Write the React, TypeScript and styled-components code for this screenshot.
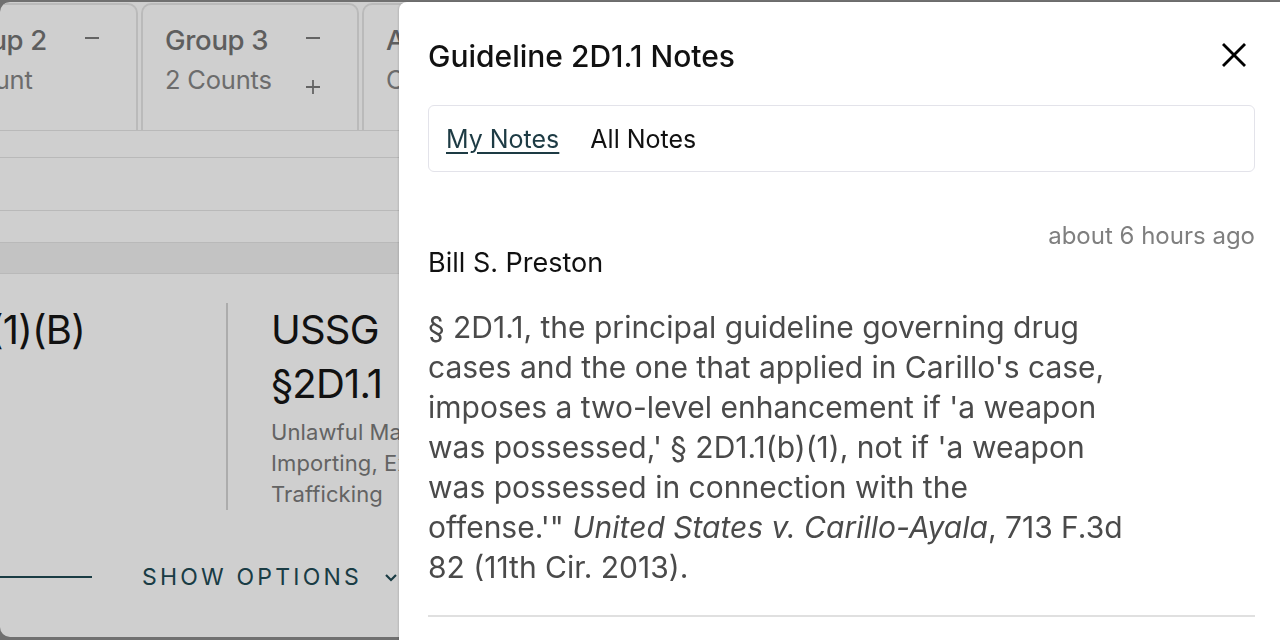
import React from "react";
import styled, { createGlobalStyle } from "styled-components";

const GlobalStyle = createGlobalStyle`
  html, body {
    margin: 0;
    padding: 0;
    height: 100%;
  }
  body {
    background: #8a8a8a;
    font-family: Inter, "Noto Sans", sans-serif;
    overflow: hidden;
  }
  #root { height: 100%; }
  * { box-sizing: border-box; }
`;

const Screen = styled.div`
  height: 640px;
  padding-top: 2px;
  overflow: hidden;
`;

const Page = styled.main`
  height: 635px;
  background: #ffffff;
  border-radius: 10px;
  overflow: hidden;
`;

const ScrollContent = styled.div`
  margin-left: -301px;
  width: 1500px;
`;

const TabStrip = styled.div`
  display: flex;
  gap: 3px;
  padding-top: 1px;
  border-bottom: 1px solid #e4e4e4;
`;

const GroupTab = styled.div`
  width: 218px;
  height: 127px;
  flex: none;
  display: flex;
  justify-content: space-between;
  padding: 18px 36px 0 22px;
  border: 2px solid #e6e6e6;
  border-bottom: none;
  border-radius: 10px 10px 0 0;
  overflow: hidden;
`;

const TabText = styled.div`
  display: flex;
  flex-direction: column;
`;

const TabTitle = styled.div`
  font-size: 27.5px;
  line-height: 34px;
  font-weight: 500;
  color: #747474;
  letter-spacing: -0.3px;
  white-space: nowrap;
`;

const TabSub = styled.div`
  margin-top: 8px;
  font-size: 25.5px;
  line-height: 30px;
  color: #868686;
  letter-spacing: -0.2px;
  white-space: nowrap;
`;

const TabActions = styled.div`
  display: flex;
  flex-direction: column;
  align-items: center;
  gap: 33px;
  padding-top: 7px;
  color: #7c7c7c;
`;

const Band = styled.div<{ $h: number; $shade?: boolean }>`
  height: ${(p) => p.$h}px;
  border-bottom: 1px solid #e4e4e4;
  background: ${(p) => (p.$shade ? "#f0f0f0" : "#ffffff")};
`;

const DetailRow = styled.div`
  display: flex;
  padding-top: 29px;
`;

const StatuteCol = styled.div`
  width: 527px;
  flex: none;
  display: flex;
  justify-content: flex-end;
  padding-right: 141px;
`;

const BigText = styled.div`
  font-size: 40px;
  line-height: 54px;
  color: #161616;
  letter-spacing: -0.8px;
  white-space: nowrap;
`;

const VDivider = styled.div`
  width: 2px;
  flex: none;
  background: #d4d4d4;
`;

const GuidelineCol = styled.div`
  padding-left: 43px;
  width: 172px;
  overflow: hidden;
`;

const GuidelineDesc = styled.div`
  margin-top: 6px;
  font-size: 22px;
  line-height: 31px;
  color: #7a7a7a;
  letter-spacing: 0.1px;
  white-space: nowrap;
`;

const OptionsRow = styled.div`
  display: grid;
  grid-template-columns: 369px auto 1fr;
  align-items: center;
  column-gap: 50px;
  padding-left: 24px;
  margin-top: 51px;
  height: 32px;
`;

const Rule = styled.div`
  height: 2px;
  background: #214a54;
`;

const OptionsButton = styled.button`
  display: flex;
  align-items: center;
  gap: 22px;
  padding: 0;
  border: none;
  background: none;
  font-family: inherit;
  font-size: 23px;
  letter-spacing: 3.2px;
  text-transform: uppercase;
  color: #214a54;
`;

const Overlay = styled.div`
  position: fixed;
  inset: 0;
  background: rgba(0, 0, 0, 0.19);
`;

const Drawer = styled.aside`
  position: fixed;
  top: 2px;
  right: 0;
  bottom: 0;
  width: 881px;
  background: #ffffff;
  border-top-left-radius: 8px;
  box-shadow: -1px 0 2px rgba(0, 0, 0, 0.12);
  padding: 38px 25px 0 29px;
  display: flex;
  flex-direction: column;
`;

const DrawerHeader = styled.header`
  display: flex;
  justify-content: space-between;
  align-items: flex-start;
`;

const DrawerTitle = styled.h2`
  margin: 0;
  font-size: 30px;
  line-height: 32px;
  font-weight: 500;
  color: #111111;
`;

const CloseButton = styled.button`
  margin: 2px 8px 0 0;
  width: 26px;
  height: 26px;
  padding: 0;
  border: none;
  background: none;
  color: #000;
  display: flex;
`;

const NotesTabs = styled.nav`
  margin-top: 33px;
  height: 67px;
  border: 1px solid #e3e3ea;
  border-radius: 6px;
  display: flex;
  align-items: center;
  gap: 31px;
  padding: 0 17px;
`;

const NotesTab = styled.span<{ $active?: boolean }>`
  font-size: 25px;
  line-height: 28px;
  color: ${(p) => (p.$active ? "#1d3b44" : "#111111")};
  text-decoration: ${(p) => (p.$active ? "underline" : "none")};
  text-underline-offset: 4px;
  text-decoration-thickness: 1.5px;
`;

const Note = styled.article`
  margin-top: 51px;
  display: flex;
  flex-direction: column;
`;

const Timestamp = styled.div`
  align-self: flex-end;
  font-size: 24px;
  line-height: 26px;
  color: #7f7f7f;
`;

const Author = styled.div`
  margin-top: 1px;
  font-size: 27px;
  line-height: 26px;
  color: #111111;
`;

const NoteBody = styled.p`
  margin: 31px 0 0;
  font-size: 30px;
  line-height: 40px;
  color: #4a4a4a;
  white-space: nowrap;
`;

const NoteDivider = styled.hr`
  margin: 28px 0 0;
  border: none;
  height: 2px;
  background: #e0e0e0;
`;

const MinusIcon = () => (
  <svg width="16" height="16" viewBox="0 0 16 16" fill="none">
    <line x1="1" y1="8" x2="15" y2="8" stroke="currentColor" strokeWidth="1.8" />
  </svg>
);

const PlusIcon = () => (
  <svg width="16" height="16" viewBox="0 0 16 16" fill="none">
    <line x1="1" y1="8" x2="15" y2="8" stroke="currentColor" strokeWidth="1.8" />
    <line x1="8" y1="1" x2="8" y2="15" stroke="currentColor" strokeWidth="1.8" />
  </svg>
);

const ChevronIcon = () => (
  <svg width="14" height="10" viewBox="0 0 14 10" fill="none">
    <polyline points="2,3 7,8 12,3" stroke="currentColor" strokeWidth="2.2" fill="none" />
  </svg>
);

const CloseIcon = () => (
  <svg width="26" height="26" viewBox="0 0 26 26" fill="none">
    <line x1="2" y1="2" x2="24" y2="24" stroke="currentColor" strokeWidth="2.8" />
    <line x1="24" y1="2" x2="2" y2="24" stroke="currentColor" strokeWidth="2.8" />
  </svg>
);

const groups = [
  { title: "Group 1", sub: "1 Count", canSplit: false },
  { title: "Group 2", sub: "1 Count", canSplit: false },
  { title: "Group 3", sub: "2 Counts", canSplit: true },
  { title: "All", sub: "Counts", canSplit: false },
];

export default function App() {
  return (
    <>
      <GlobalStyle />
      <Screen>
        <Page>
          <ScrollContent>
            <TabStrip>
              {groups.map((g) => (
                <GroupTab key={g.title}>
                  <TabText>
                    <TabTitle>{g.title}</TabTitle>
                    <TabSub>{g.sub}</TabSub>
                  </TabText>
                  <TabActions>
                    <MinusIcon />
                    {g.canSplit && <PlusIcon />}
                  </TabActions>
                </GroupTab>
              ))}
            </TabStrip>
            <Band $h={27} />
            <Band $h={53} />
            <Band $h={32} />
            <Band $h={31} $shade />
            <DetailRow>
              <StatuteCol>
                <BigText>21 U.S.C. § 841(b)(1)(B)</BigText>
              </StatuteCol>
              <VDivider />
              <GuidelineCol>
                <BigText>USSG</BigText>
                <BigText>§2D1.1</BigText>
                <GuidelineDesc>
                  Unlawful Manufacturing,
                  <br />
                  Importing, Exporting,
                  <br />
                  Trafficking
                </GuidelineDesc>
              </GuidelineCol>
            </DetailRow>
            <OptionsRow>
              <Rule />
              <OptionsButton>
                Show Options
                <ChevronIcon />
              </OptionsButton>
              <Rule />
            </OptionsRow>
          </ScrollContent>
        </Page>
      </Screen>
      <Overlay />
      <Drawer>
        <DrawerHeader>
          <DrawerTitle>Guideline 2D1.1 Notes</DrawerTitle>
          <CloseButton aria-label="Close">
            <CloseIcon />
          </CloseButton>
        </DrawerHeader>
        <NotesTabs>
          <NotesTab $active>My Notes</NotesTab>
          <NotesTab>All Notes</NotesTab>
        </NotesTabs>
        <Note>
          <Timestamp>about 6 hours ago</Timestamp>
          <Author>Bill S. Preston</Author>
          <NoteBody>
            § 2D1.1, the principal guideline governing drug
            <br />
            cases and the one that applied in Carillo's case,
            <br />
            imposes a two-level enhancement if 'a weapon
            <br />
            was possessed,' § 2D1.1(b)(1), not if 'a weapon
            <br />
            was possessed in connection with the
            <br />
            offense.'" <i>United States v. Carillo-Ayala</i>, 713 F.3d
            <br />
            82 (11th Cir. 2013).
          </NoteBody>
          <NoteDivider />
        </Note>
      </Drawer>
    </>
  );
}
